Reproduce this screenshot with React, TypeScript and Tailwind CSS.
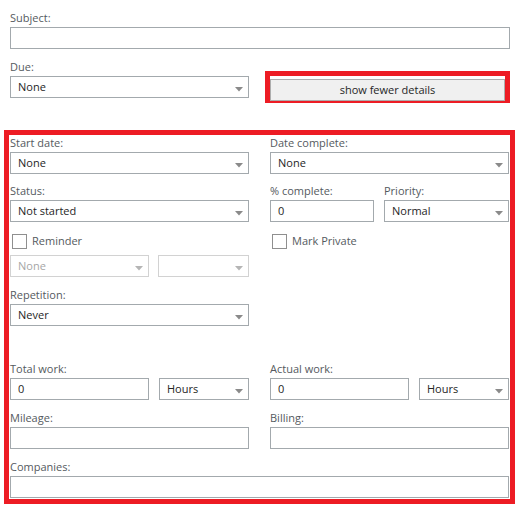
import React from "react";

const font = { fontFamily: '"Open Sans", "Noto Sans", sans-serif' };

function Arrow({ light }: { light?: boolean }) {
  return (
    <svg width="8" height="5" viewBox="0 0 8 5" className="absolute right-[5px] top-[10px]">
      <path d="M0 0 H8 L4 4.5 Z" fill={light ? "#b5b5b5" : "#8a8a8a"} />
    </svg>
  );
}

function Select({ value, w, disabled }: { value: string; w: string; disabled?: boolean }) {
  return (
    <div
      className={`relative h-[22px] ${w} border ${
        disabled ? "border-[#d2d2d2] text-[#a6a6a6]" : "border-[#a3a9ad] text-[#262626]"
      } bg-white pl-[7px] text-[11px] leading-[20px]`}
    >
      {value}
      <Arrow light={disabled} />
    </div>
  );
}

function Input({ value, w }: { value?: string; w: string }) {
  return (
    <div className={`h-[22px] ${w} border border-[#a3a9ad] bg-white pl-[7px] text-[11px] leading-[20px] text-[#262626]`}>
      {value}
    </div>
  );
}

function Label({ children }: { children: React.ReactNode }) {
  return <div className="h-4 mb-[1px] text-[11px] leading-4 text-[#555a5e]">{children}</div>;
}

function Check({ text }: { text: string }) {
  return (
    <div className="flex items-center h-[15px] ml-[2px]">
      <div className="w-[15px] h-[15px] border border-[#8f8f8f] bg-white" />
      <span className="ml-[5px] text-[11px] text-[#555a5e]">{text}</span>
    </div>
  );
}

export default function App() {
  return (
    <div className="w-[520px] h-[517px] bg-white overflow-hidden" style={font}>
      {/* top fields */}
      <div className="pt-[10px] pl-[10px] pr-[10px]">
        <Label>Subject:</Label>
        <Input w="w-[500px]" />
        <div className="flex mt-[10px]">
          <div className="w-[239px]">
            <Label>Due:</Label>
            <Select value="None" w="w-[239px]" />
          </div>
          <div className="ml-[16px] mt-[12px] border-[5px] border-[#ed1c24] w-[249px] h-[32px]">
            <button className="w-full h-[22px] border border-[#adadad] bg-[#f0f0f0] text-[11px] leading-[20px] text-[#262626]">
              show fewer details
            </button>
          </div>
        </div>
      </div>

      {/* details */}
      <div className="ml-[4px] mt-[27px] w-[511px] h-[374px] border-[5px] border-[#ed1c24] px-[1px]">
        <div className="flex gap-[21px]">
          <div className="w-[239px]">
            <Label>Start date:</Label>
            <Select value="None" w="w-[239px]" />
          </div>
          <div className="w-[239px]">
            <Label>Date complete:</Label>
            <Select value="None" w="w-[239px]" />
          </div>
        </div>

        <div className="flex gap-[21px] mt-[9px]">
          <div className="w-[239px]">
            <Label>Status:</Label>
            <Select value="Not started" w="w-[239px]" />
          </div>
          <div className="w-[239px] flex gap-[10px]">
            <div>
              <Label>% complete:</Label>
              <Input value="0" w="w-[104px]" />
            </div>
            <div>
              <Label>Priority:</Label>
              <Select value="Normal" w="w-[125px]" />
            </div>
          </div>
        </div>

        <div className="flex gap-[21px] mt-[12px]">
          <div className="w-[239px]">
            <Check text="Reminder" />
            <div className="flex gap-[9px] mt-[6px]">
              <Select value="None" w="w-[139px]" disabled />
              <Select value="" w="w-[91px]" disabled />
            </div>
          </div>
          <div className="w-[239px]">
            <Check text="Mark Private" />
          </div>
        </div>

        <div className="mt-[10px] w-[239px]">
          <Label>Repetition:</Label>
          <Select value="Never" w="w-[239px]" />
        </div>

        <div className="flex gap-[21px] mt-[35px]">
          <div className="w-[239px]">
            <Label>Total work:</Label>
            <div className="flex gap-[10px]">
              <Input value="0" w="w-[139px]" />
              <Select value="Hours" w="w-[90px]" />
            </div>
          </div>
          <div className="w-[239px]">
            <Label>Actual work:</Label>
            <div className="flex gap-[10px]">
              <Input value="0" w="w-[139px]" />
              <Select value="Hours" w="w-[90px]" />
            </div>
          </div>
        </div>

        <div className="flex gap-[21px] mt-[10px]">
          <div className="w-[239px]">
            <Label>Mileage:</Label>
            <Input w="w-[239px]" />
          </div>
          <div className="w-[239px]">
            <Label>Billing:</Label>
            <Input w="w-[239px]" />
          </div>
        </div>

        <div className="mt-[10px]">
          <Label>Companies:</Label>
          <Input w="w-[499px]" />
        </div>
      </div>
    </div>
  );
}
